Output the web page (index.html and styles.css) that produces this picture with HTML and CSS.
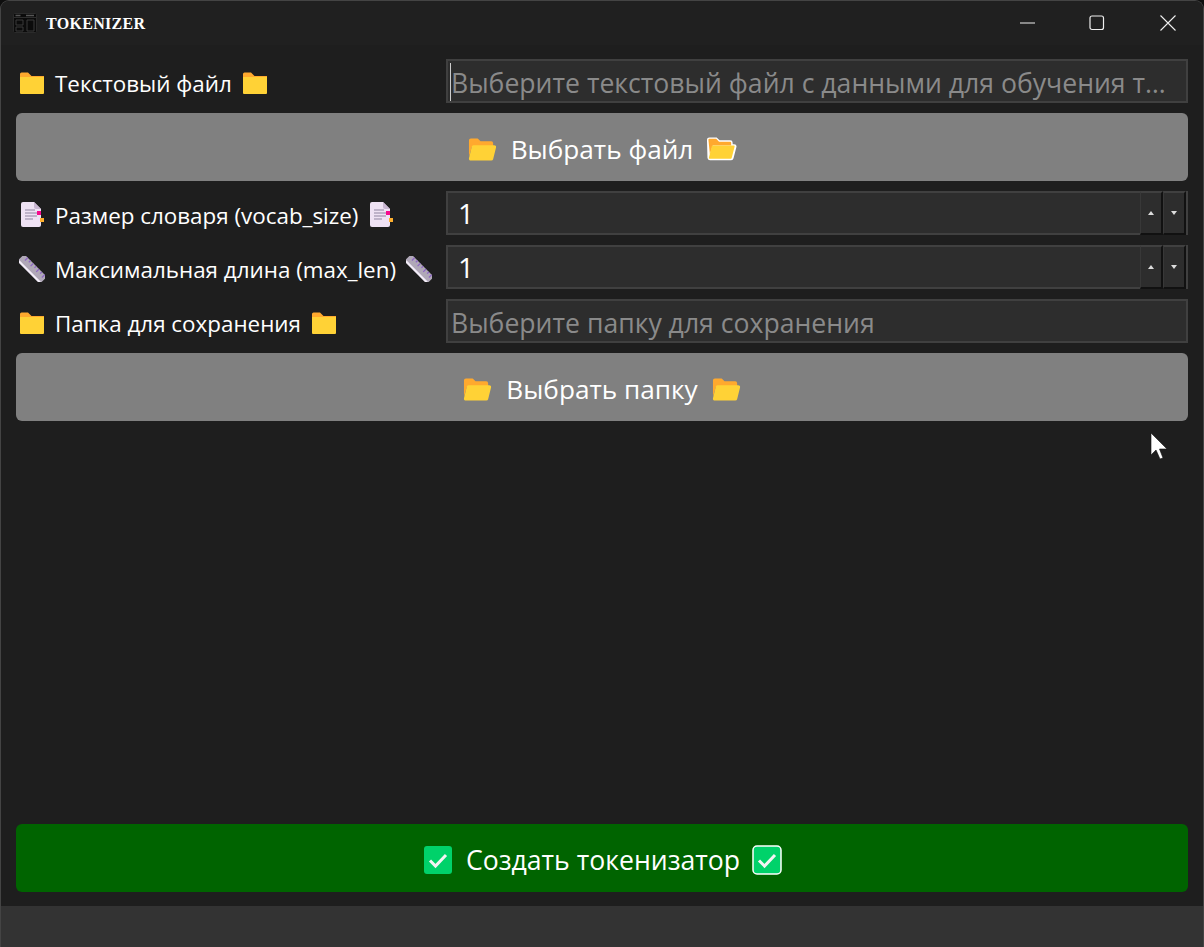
FILE: index.html
```html
<!DOCTYPE html>
<html>
<head>
  <title>TOKENIZER</title>
  <meta charset="UTF-8">
  <link rel="stylesheet" href="styles.css">
</head>
<body>
  <svg class="defs" width="0" height="0">
    <symbol id="folder" viewBox="-1 -2 26 26">
      <path d="M0 2a1.500 1.500 0 0 1 1.500-1.500h6.500l3.500 3.500h12.500v4h-24z" fill="#ffa92e"/>
      <path d="M0 5h24v16a1 1 0 0 1-1 1h-22a1 1 0 0 1-1-1z" fill="#ffd236"/>
    </symbol>
    <symbol id="folderOpen" viewBox="0 0 30 25">
      <path d="M1 3a2 2 0 0 1 2-2h7l3 3h11a2 2 0 0 1 2 2v4h-22l-3 10z" fill="#ffa92e"/>
      <path d="M6 8h21a2 2 0 0 1 2 2.500l-3 12a2 2 0 0 1-2 1.500h-21a2 2 0 0 1-2-2.500l3-12a2 2 0 0 1 2-1.500z" fill="#ffd236"/>
    </symbol>
    <symbol id="folderOpenLine" viewBox="0 0 32 26">
      <path d="M1 3.500a2.500 2.500 0 0 1 2.500-2.500h7.500l3 3h11a2.500 2.500 0 0 1 2.500 2.500v1.500h1.500a2.500 2.500 0 0 1 2.400 3l-3 11.500a2.500 2.500 0 0 1-2.400 2h-22a2.500 2.500 0 0 1-2.500-2.500z" fill="#fff"/>
      <path d="M2.500 3.500a1 1 0 0 1 1-1h7l3 3h11.500a1 1 0 0 1 1 1v3h-19l-3 9z" fill="#ffa92e"/>
      <path d="M7 9.500h21.500a1 1 0 0 1 1 1.300l-3 11.500a1 1 0 0 1-1 .7h-21.500a1 1 0 0 1-1-1.300l3-11.500a1 1 0 0 1 1-.7z" fill="#ffd236"/>
    </symbol>
    <symbol id="note" viewBox="-1 0 26 26">
      <path d="M1 2a2 2 0 0 1 2-2h11l7 7v16a2 2 0 0 1-2 2h-16a2 2 0 0 1-2-2z" fill="#efe2f4"/>
      <path d="M14 0l7 7h-5a2 2 0 0 1-2-2z" fill="#c9b6d2"/>
      <path d="M5 8h10M5 11h12M5 14h12M5 17h8" stroke="#8f83a0" stroke-width="1.200"/>
      <rect x="17" y="9" width="4" height="4" fill="#f70a8d"/>
      <rect x="20" y="16" width="4" height="4" fill="#ffb02e"/>
    </symbol>
    <symbol id="ruler" viewBox="0 0 26 26">
      <g transform="translate(13 13) rotate(45)">
        <rect x="-16" y="-5" width="32" height="10" rx="2" fill="#b0a8b8"/>
        <path d="M-15 3.800h30" stroke="#f3eef8" stroke-width="2"/>
        <path d="M-11-5v4M-7-5v2.500M-3-5v4M1-5v2.500M5-5v4M9-5v2.500M13-5v4" stroke="#8d65c5" stroke-width="1.200"/>
      </g>
    </symbol>
    <symbol id="check" viewBox="0 0 28 28">
      <rect width="28" height="28" rx="3" fill="#00d26a"/>
      <path d="M6 14.500l5.500 5.500 10.500-11" fill="none" stroke="#f4f4f4" stroke-width="3"/>
    </symbol>
  </svg>

  <div class="window">
    <div class="titlebar">
      <svg class="appIcon" viewBox="0 0 24 20">
        <rect x=".5" y=".5" width="23" height="19" rx="1" fill="#0b0b0b" stroke="#2b2b2b"/>
        <path d="M1 4.500h22" stroke="#2e2e2e"/>
        <path d="M2.500 2.500h5M13 2.500h8" stroke="#555" stroke-width="1.500"/>
        <path d="M3 7h7v5h-7zM3 14h7v4h-7zM14 7h7v11h-7z" fill="none" stroke="#3a3a3a"/>
      </svg>
      <div class="appName">TOKENIZER</div>
      <div class="winButtons">
        <svg class="winBtn minBtn" viewBox="0 0 16 16"><path d="M0 8h15" stroke="#eee"/></svg>
        <svg class="winBtn" viewBox="0 0 16 16"><rect x="1" y="1" width="13.500" height="13.500" rx="2" fill="none" stroke="#eee" stroke-width="1.200"/></svg>
        <svg class="winBtn" viewBox="0 0 16 16"><path d="M.5 .5l15 15M15.500 .5l-15 15" stroke="#eee" stroke-width="1.100"/></svg>
      </div>
    </div>

    <div class="content">
      <div class="row">
        <div class="label"><svg class="ico"><use href="#folder"/></svg>Текстовый файл<svg class="ico"><use href="#folder"/></svg></div>
        <div class="field">
          <input class="input" type="text" placeholder="Выберите текстовый файл с данными для обучения токенизатора">
          <span class="caret"></span>
        </div>
      </div>
      <button class="btn gray"><svg class="icoBtn"><use href="#folderOpen"/></svg>Выбрать файл<svg class="icoBtnLine"><use href="#folderOpenLine"/></svg></button>

      <div class="row">
        <div class="label"><svg class="ico"><use href="#note"/></svg>Размер словаря (vocab_size)<svg class="ico"><use href="#note"/></svg></div>
        <div class="field spin">
          <input class="input num" type="text" value="1">
          <div class="spinBtn"><span class="up"></span></div>
          <div class="spinBtn"><span class="down"></span></div>
        </div>
      </div>

      <div class="row">
        <div class="label"><svg class="ico"><use href="#ruler"/></svg>Максимальная длина (max_len)<svg class="ico"><use href="#ruler"/></svg></div>
        <div class="field spin">
          <input class="input num" type="text" value="1">
          <div class="spinBtn"><span class="up"></span></div>
          <div class="spinBtn"><span class="down"></span></div>
        </div>
      </div>

      <div class="row">
        <div class="label"><svg class="ico"><use href="#folder"/></svg>Папка для сохранения<svg class="ico"><use href="#folder"/></svg></div>
        <div class="field">
          <input class="input" type="text" placeholder="Выберите папку для сохранения">
        </div>
      </div>
      <button class="btn gray"><svg class="icoBtn"><use href="#folderOpen"/></svg>Выбрать папку<svg class="icoBtn"><use href="#folderOpen"/></svg></button>

      <div class="spacer"></div>

      <button class="btn green"><svg class="icoCheck"><use href="#check"/></svg>Создать токенизатор<svg class="icoCheckLine" viewBox="0 0 30 30"><rect x="1" y="1" width="28" height="28" rx="4" fill="#00d26a" stroke="#fff" stroke-width="1.500"/><path d="M7 15.500l5.500 5.500 10.500-11" fill="none" stroke="#f4f4f4" stroke-width="3"/></svg></button>
    </div>

    <div class="statusbar"></div>
  </div>

  <svg class="cursor" viewBox="0 0 18 26">
    <path d="M1 0v22l5-5 4 9 3-1-3.500-9h7.500z" fill="#fff" stroke="#111" stroke-width=".6"/>
  </svg>
</body>
</html>
```

FILE: styles.css
```css
html, body {
  margin: 0;
  padding: 0;
  height: 100%;
  background: #0e0e0e;
  overflow: hidden;
}
body {
  color: #fff;
  font-family: "Open Sans", "Noto Sans", Arial, sans-serif;
}
.defs {
  position: absolute;
}
.window {
  box-sizing: border-box;
  height: 947px;
  display: flex;
  flex-direction: column;
  background: #1e1e1e;
  border: 1px solid #444;
  border-bottom: 0;
  border-radius: 9px 9px 0 0;
  overflow: hidden;
}
.titlebar {
  flex: none;
  height: 44px;
  display: flex;
  align-items: center;
  padding: 0 12px;
  background: #202020;
}
.appIcon {
  width: 24px;
  height: 20px;
  margin-right: 9px;
  margin-top: -1px;
}
.appName {
  font-family: "Liberation Serif", serif;
  font-weight: bold;
  font-size: 16px;
  letter-spacing: .3px;
  padding-top: 1px;
}
.winButtons {
  margin-left: auto;
  display: flex;
  gap: 55px;
  padding-right: 15px;
}
.winBtn {
  width: 16px;
  height: 16px;
}
.minBtn {
  margin-right: -2px;
}
.content {
  flex: 1;
  display: flex;
  flex-direction: column;
  gap: 10px;
  padding: 14px 15px 14px;
}
.row {
  display: flex;
  height: 44px;
}
.label {
  flex: none;
  width: 430px;
  box-sizing: border-box;
  padding: 4px 0 0 3px;
  display: flex;
  align-items: center;
  font-size: 22.4px;
}
.ico {
  width: 26px;
  height: 26px;
  flex: none;
  margin-right: 10px;
}
.label .ico:last-child {
  margin-right: 0;
  margin-left: 10px;
}
.field {
  flex: 1;
  min-width: 0;
  position: relative;
  display: flex;
}
.input {
  flex: 1;
  min-width: 0;
  box-sizing: border-box;
  height: 44px;
  margin: 0;
  padding: 3px 18px 0 3px;
  background: #2d2d2d;
  border: 2px solid #404040;
  border-radius: 0;
  outline: none;
  color: #fff;
  font-family: inherit;
  font-size: 26.6px;
}
.input::placeholder {
  color: #8a8a8a;
  opacity: 1;
}
.input:placeholder-shown {
  text-overflow: ellipsis;
}
.num {
  padding: 0 4px 0 10px;
  border-right: 0;
  font-size: 28px;
}
.caret {
  position: absolute;
  left: 4px;
  top: 4px;
  width: 1px;
  height: 38px;
  background: #ccc;
}
.spin {
  border-right: 2px solid #404040;
  background: #2d2d2d;
}
.spinBtn {
  flex: none;
  box-sizing: border-box;
  width: 23px;
  height: 44px;
  display: flex;
  align-items: center;
  justify-content: center;
  background: #2d2d2d;
  border-top: 2px solid #404040;
  border-left: 1px solid #383838;
  border-right: 2px solid #111;
  border-bottom: 2px solid #111;
}
.up {
  width: 0;
  height: 0;
  border: 3px solid transparent;
  border-top: 0;
  border-bottom: 4px solid #ddd;
}
.down {
  width: 0;
  height: 0;
  border: 3px solid transparent;
  border-bottom: 0;
  border-top: 4px solid #ddd;
}
.btn {
  flex: none;
  box-sizing: border-box;
  height: 68px;
  display: flex;
  align-items: center;
  justify-content: center;
  padding: 4px 0 0;
  border: 0;
  border-radius: 6px;
  color: #fff;
  font-family: inherit;
  font-size: 26.2px;
}
.gray {
  background: #808080;
}
.green {
  background: #006400;
  font-size: 26.6px;
}
.icoBtn {
  width: 29px;
  height: 25px;
  margin: 0 14px;
}
.icoBtnLine {
  width: 31px;
  height: 26px;
  margin: 0 13px;
}
.icoCheck {
  width: 28px;
  height: 28px;
  margin: 0 14px;
}
.icoCheckLine {
  width: 30px;
  height: 30px;
  margin: 0 12px;
}
.spacer {
  flex: 1;
}
.statusbar {
  flex: none;
  height: 41px;
  background: #333;
}
.cursor {
  position: absolute;
  left: 1150px;
  top: 433px;
  width: 18px;
  height: 26px;
}
```
